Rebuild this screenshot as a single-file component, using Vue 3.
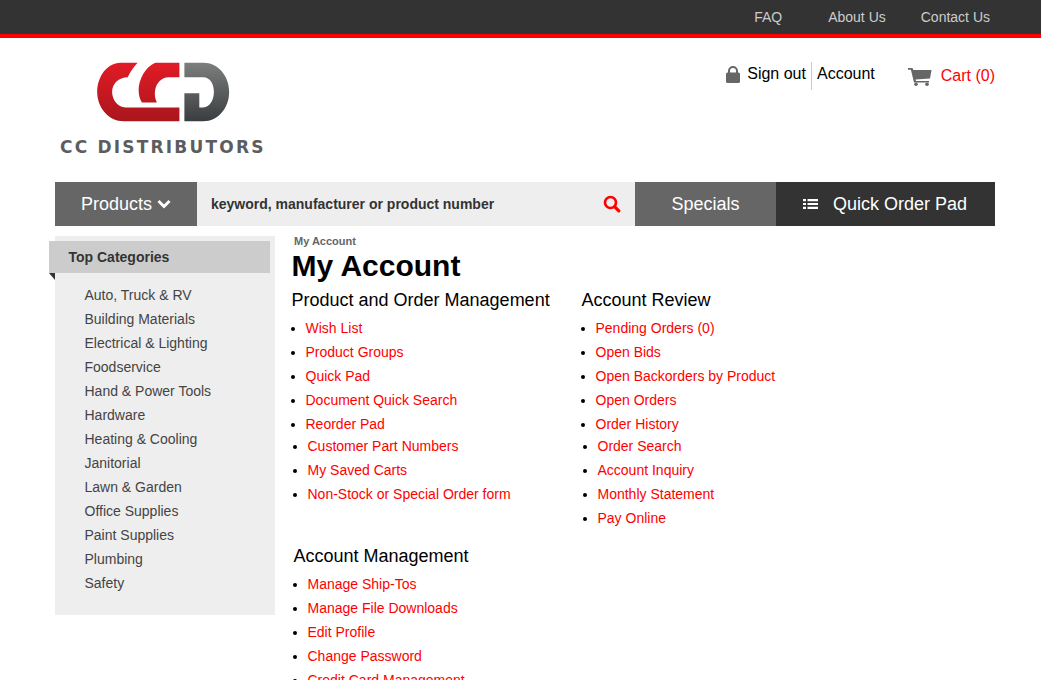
<template>
  <div class="page">
    <div class="top-bar">
      <a>FAQ</a>
      <a>About Us</a>
      <a class="contact">Contact Us</a>
    </div>

    <div class="wrap">
      <header class="header">
        <div class="logo">
          <svg class="logo-mark" width="137" height="63" viewBox="165 60 410 190">
            <defs>
              <linearGradient id="red" gradientUnits="userSpaceOnUse" x1="0" y1="68" x2="0" y2="245">
                <stop offset="0" stop-color="#e21b26" />
                <stop offset="1" stop-color="#a9161d" />
              </linearGradient>
              <linearGradient id="grey" gradientUnits="userSpaceOnUse" x1="0" y1="68" x2="0" y2="245">
                <stop offset="0" stop-color="#7d7f7e" />
                <stop offset="1" stop-color="#3a3d3f" />
              </linearGradient>
            </defs>
            <path fill="url(#red)" d="M292 68L240 68C200 68 170 110 170 156C170 205 205 245 250 245L418 245L418 203L255 203C232 203 215 180 215 156C215 132 235 112 262 112C270 95 280 80 292 68Z" />
            <path fill="url(#red)" d="M418 68L345 68C315 80 295 120 295 150C295 165 298 178 305 188L350 188C345 178 342 165 345 150C348 130 365 112 385 112L418 112Z" />
            <path fill="url(#grey)" d="M433 68L490 68C535 68 568 108 568 156C568 205 535 245 490 245L433 245L433 160L478 160L478 203L490 203C510 203 522 180 522 156C522 132 510 112 490 112L433 112Z" />
          </svg>
          <div class="logo-text">CC DISTRIBUTORS</div>
        </div>
        <div class="user-links">
          <svg class="lock" width="14" height="17" viewBox="0 0 14 17">
            <path fill="none" stroke="#666" stroke-width="2" d="M3 7V5a4 4 0 0 1 8 0V7" />
            <rect x="0" y="6.500" width="14" height="10.500" rx="1.500" fill="#666" />
          </svg>
          <a class="sign-out">Sign out</a>
          <a class="account">Account</a>
          <svg class="cart" width="24" height="18" viewBox="0 0 24 18">
            <path fill="#666" d="M0 0H4.500L5.300 2H23.500L22 10.500L7.500 11.500L8 13H21V14.500H6L2.900 1.800H0Z" />
            <circle cx="8" cy="16.200" r="1.800" fill="#666" />
            <circle cx="19" cy="16.200" r="1.800" fill="#666" />
          </svg>
          <a class="cart-link">Cart (0)</a>
        </div>
      </header>

      <nav class="nav">
        <div class="products">
          Products
          <svg width="14" height="10" viewBox="0 0 14 10">
            <path fill="none" stroke="#fff" stroke-width="3" d="M1.500 2L7 7.500L12.500 2" />
          </svg>
        </div>
        <div class="search">
          <span>keyword, manufacturer or product number</span>
          <svg width="18" height="18" viewBox="0 0 18 18">
            <circle cx="7.500" cy="7.500" r="5.500" fill="none" stroke="#f00" stroke-width="2.600" />
            <path stroke="#f00" stroke-width="3.200" stroke-linecap="round" d="M11.800 11.800L15.800 15.800" />
          </svg>
        </div>
        <div class="specials">Specials</div>
        <div class="quick">
          <svg width="15" height="12" viewBox="0 0 15 12">
            <path fill="#fff" d="M0 1h3v2.200H0zM4.500 1H15v2.200H4.500zM0 4.900h3v2.200H0zM4.500 4.900H15v2.200H4.500zM0 8.800h3V11H0zM4.500 8.800H15V11H4.500z" />
          </svg>
          Quick Order Pad
        </div>
      </nav>

      <div class="main">
        <aside class="sidebar">
          <div class="side-title">Top Categories</div>
          <ul class="side-list">
            <li v-for="cat in categories" :key="cat">{{ cat }}</li>
          </ul>
        </aside>

        <section class="content">
          <div class="crumb">My Account</div>
          <h1>My Account</h1>
          <div class="columns">
            <div class="col">
              <h3>Product and Order Management</h3>
              <ul class="links">
                <li v-for="item in productLinks" :key="item"><a>{{ item }}</a></li>
              </ul>
              <ul class="links second">
                <li v-for="item in productLinks2" :key="item"><a>{{ item }}</a></li>
              </ul>
            </div>
            <div class="col">
              <h3>Account Review</h3>
              <ul class="links">
                <li v-for="item in reviewLinks" :key="item"><a>{{ item }}</a></li>
              </ul>
              <ul class="links second">
                <li v-for="item in reviewLinks2" :key="item"><a>{{ item }}</a></li>
              </ul>
            </div>
          </div>
          <div class="manage">
            <h3>Account Management</h3>
            <ul class="links">
              <li v-for="item in manageLinks" :key="item"><a>{{ item }}</a></li>
            </ul>
          </div>
        </section>
      </div>
    </div>
  </div>
</template>

<script setup>
const categories = [
  'Auto, Truck & RV',
  'Building Materials',
  'Electrical & Lighting',
  'Foodservice',
  'Hand & Power Tools',
  'Hardware',
  'Heating & Cooling',
  'Janitorial',
  'Lawn & Garden',
  'Office Supplies',
  'Paint Supplies',
  'Plumbing',
  'Safety'
]
const productLinks = ['Wish List', 'Product Groups', 'Quick Pad', 'Document Quick Search', 'Reorder Pad']
const productLinks2 = ['Customer Part Numbers', 'My Saved Carts', 'Non-Stock or Special Order form']
const reviewLinks = ['Pending Orders (0)', 'Open Bids', 'Open Backorders by Product', 'Open Orders', 'Order History']
const reviewLinks2 = ['Order Search', 'Account Inquiry', 'Monthly Statement', 'Pay Online']
const manageLinks = ['Manage Ship-Tos', 'Manage File Downloads', 'Edit Profile', 'Change Password', 'Credit Card Management']
</script>

<style>
html,
body {
  margin: 0;
  height: 680px;
  overflow: hidden;
  background: #fff;
}
</style>

<style scoped>
.page {
  height: 680px;
  overflow: hidden;
  font-family: "Liberation Sans", Arial, sans-serif;
  font-size: 14px;
  color: #000;
}

.top-bar {
  display: flex;
  justify-content: flex-end;
  align-items: center;
  height: 34px;
  padding-right: 51px;
  background: #333;
  border-bottom: 4px solid #f00;
  color: #ccc;
}

.top-bar a {
  margin-left: 46px;
}

.top-bar .contact {
  margin-left: 35px;
}

.wrap {
  width: 940px;
  margin-left: 55px;
}

.header {
  display: flex;
  justify-content: space-between;
  height: 144px;
}

.logo {
  width: 220px;
  padding-top: 22px;
}

.logo-mark {
  display: block;
  margin-left: 40px;
}

.logo-text {
  margin: 15px 0 0 5px;
  font-family: "DejaVu Sans", sans-serif;
  font-size: 17px;
  font-weight: 700;
  line-height: 18px;
  letter-spacing: 2.200px;
  color: #5c5d5f;
  white-space: nowrap;
}

.user-links {
  display: flex;
  align-items: flex-start;
  padding-top: 24px;
  font-size: 16px;
  line-height: 24px;
}

.lock {
  margin: 4px 7px 0 0;
}

.sign-out {
  padding-right: 5px;
  border-right: 1px solid #ccc;
  height: 28px;
}

.account {
  margin-left: 5px;
}

.cart {
  margin: 6px 9px 0 33px;
}

.cart-link {
  margin-top: 2px;
  color: #f00;
}

.nav {
  display: flex;
  height: 44px;
  font-size: 18px;
  color: #fff;
}

.nav > div {
  display: flex;
  align-items: center;
}

.products {
  justify-content: center;
  gap: 5px;
  width: 142px;
  background: #666;
}

.search {
  justify-content: space-between;
  width: 438px;
  padding: 0 14px;
  box-sizing: border-box;
  background: #eee;
  color: #333;
  font-size: 14px;
  font-weight: 700;
}

.specials {
  justify-content: center;
  width: 141px;
  background: #666;
}

.quick {
  flex: 1;
  gap: 15px;
  padding-left: 27px;
  background: #333;
}

.main {
  display: flex;
  margin-top: 10px;
}

.sidebar {
  flex: none;
  width: 220px;
  height: 379px;
  background: #eee;
}

.side-title {
  position: relative;
  width: 201.500px;
  height: 32px;
  margin: 5px 0 0 -6px;
  padding-left: 19.500px;
  background: #ccc;
  color: #333;
  font-weight: 700;
  line-height: 32px;
}

.side-title::after {
  content: "";
  position: absolute;
  left: 0;
  top: 32px;
  border-top: 7px solid #333;
  border-left: 6px solid transparent;
}

.side-list {
  margin: 10px 0 0;
  padding: 0 0 0 29.500px;
  list-style: none;
  color: #444;
  line-height: 24px;
}

.content {
  padding-left: 17px;
}

.crumb {
  margin: 0 0 0 2px;
  font-size: 11px;
  font-weight: 700;
  line-height: 11px;
  color: #666;
}

h1 {
  margin: 0 0 0 -0.500px;
  font-size: 30px;
  line-height: 38px;
}

.columns {
  display: flex;
  margin-top: 3px;
}

.col {
  width: 290px;
}

h3 {
  margin: 0 0 0 -0.500px;
  font-size: 18px;
  font-weight: 400;
  line-height: 24px;
}

.links {
  margin: 4px 0 0;
  padding: 0 0 0 13.500px;
  line-height: 24px;
  color: #000;
}

.links a {
  color: #f00;
}

.second {
  margin: -2px 0 0 2px;
}

.manage {
  margin: 14px 0 0 2px;
}
</style>
